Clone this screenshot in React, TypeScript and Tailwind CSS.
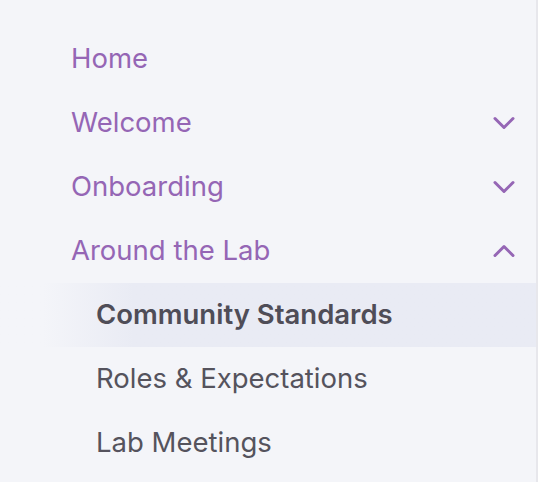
import { ChevronDown, ChevronUp } from 'lucide-react'

type Item = { label: string; open?: boolean }

const top: Item[] = [
  { label: 'Home' },
  { label: 'Welcome', open: false },
  { label: 'Onboarding', open: false },
  { label: 'Around the Lab', open: true },
]

const sub = ['Community Standards', 'Roles & Expectations', 'Lab Meetings']

export default function App() {
  return (
    <div className="h-[482px] w-[538px] flex bg-[#f4f5f9] font-['Inter',sans-serif]">
      <nav className="w-[536px] pt-[27px] flex flex-col">
        {top.map((item) => (
          <a
            key={item.label}
            href="#"
            className="h-16 pl-[71px] pr-[14px] flex items-center justify-between text-[27.5px] text-[#9566b5]"
          >
            <span>{item.label}</span>
            {item.open === false && <ChevronDown className="w-9 h-9" strokeWidth={2} />}
            {item.open === true && <ChevronUp className="w-9 h-9" strokeWidth={2} />}
          </a>
        ))}

        {sub.map((label, i) => (
          <a
            key={label}
            href="#"
            className={
              i === 0
                ? 'h-16 pl-[96px] flex items-center text-[27.5px] font-semibold text-[#4f4d57] bg-gradient-to-r from-[#f4f5f9] from-[8%] to-[#e9ebf4] to-[25%]'
                : 'h-16 pl-[96px] flex items-center text-[27.5px] text-[#55535d]'
            }
          >
            {label}
          </a>
        ))}
      </nav>
      <div className="w-[2px] bg-[#e7e7ec]"></div>
    </div>
  )
}
